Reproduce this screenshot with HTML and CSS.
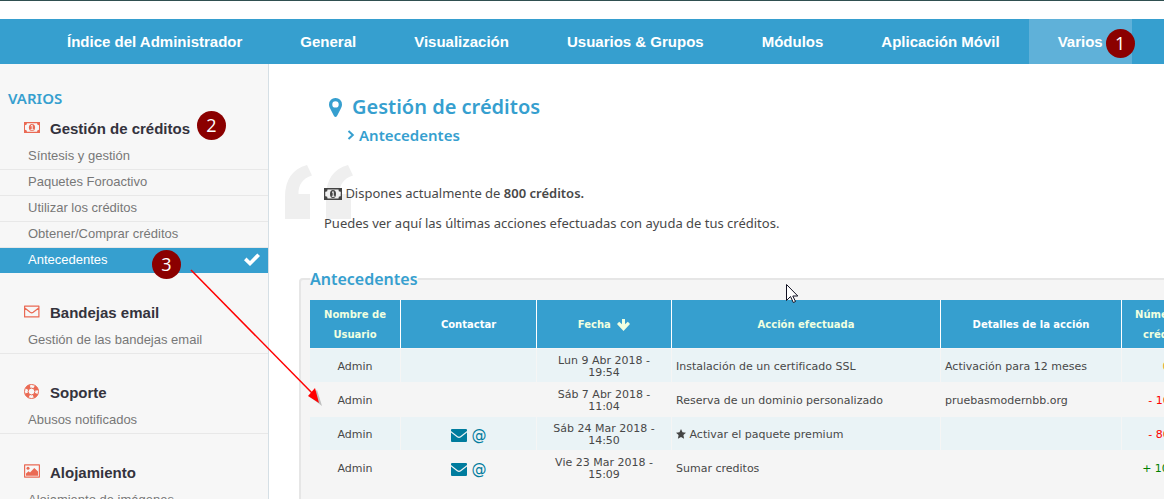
FILE: index.html
```html
<!DOCTYPE html>
<html lang="es">
<head>
<meta charset="utf-8">
<title>Gestión de créditos</title>
<link rel="stylesheet" href="styles.css">
</head>
<body>
<div class="banner"></div>
<nav class="topnav">
  <a href="#">Índice del Administrador</a>
  <a href="#">General</a>
  <a href="#">Visualización</a>
  <a href="#">Usuarios &amp; Grupos</a>
  <a href="#">Módulos</a>
  <a href="#">Aplicación Móvil</a>
  <a href="#" class="current">Varios<span class="step step-one">1</span></a>
</nav>
<div class="layout">
  <aside class="sidebar">
    <h2 class="side-title">Varios</h2>
    <section class="group">
      <h3 class="group-title">
        <svg class="group-icon" viewBox="0 0 16 16"><path fill-rule="evenodd" d="M0 2h16v11H0zM3 3.300a2 2 0 0 1-2 2v4.400a2 2 0 0 1 2 2h10a2 2 0 0 1 2-2V5.300a2 2 0 0 1-2-2z"/><ellipse cx="8" cy="7.500" rx="3.100" ry="3.600"/><path d="M6.800 6.200 8.200 5.100v4.400M6.600 9.700h3" fill="none" stroke="#f7f7f7"/></svg>
        <span>Gestión de créditos</span><span class="step step-two">2</span>
      </h3>
      <ul class="links">
        <li><a href="#">Síntesis y gestión</a></li>
        <li><a href="#">Paquetes Foroactivo</a></li>
        <li><a href="#">Utilizar los créditos</a></li>
        <li><a href="#">Obtener/Comprar créditos</a></li>
        <li class="active"><a href="#">Antecedentes</a><span class="step step-three">3</span>
          <svg class="check" viewBox="0 0 16 13"><path d="M0 7.200 2.500 4.600 6 7.900 13.300.4 16 3 6 13z"/></svg></li>
      </ul>
    </section>
    <section class="group">
      <h3 class="group-title">
        <svg class="group-icon" viewBox="0 0 16 16"><path d="M.6 2.100h14.300v10.800H.6zM.8 4l5.400 4.300q1.500 1.100 3 0L14.700 4" fill="none" stroke="#ea6a54" stroke-width="1.200" stroke-linejoin="round"/></svg>
        <span>Bandejas email</span>
      </h3>
      <ul class="links"><li><a href="#">Gestión de las bandejas email</a></li></ul>
    </section>
    <section class="group">
      <h3 class="group-title">
        <svg class="group-icon" viewBox="0 0 16 16"><g fill="none" stroke="#ea6a54"><circle cx="7.500" cy="7.500" r="7"/><circle cx="7.500" cy="7.500" r="3.400"/><circle cx="7.500" cy="7.500" r="5.300" stroke-width="3.800" stroke-dasharray="4.163 4.163" stroke-dashoffset="-2.081"/></g></svg>
        <span>Soporte</span>
      </h3>
      <ul class="links"><li><a href="#">Abusos notificados</a></li></ul>
    </section>
    <section class="group">
      <h3 class="group-title">
        <svg class="group-icon" viewBox="0 0 16 16"><path d="M.6.900h14.800v12.200H.6z" fill="none" stroke="#ea6a54" stroke-width="1.200" stroke-linejoin="round"/><circle cx="4" cy="4.300" r="1.500"/><path d="M2 11.800V9.600L4.600 7.200 6 8.600 10.300 4 14 7.500v4.300z"/></svg>
        <span>Alojamiento</span>
      </h3>
      <ul class="links"><li><a href="#">Alojamiento de imágenes</a></li></ul>
    </section>
  </aside>
  <main class="content">
    <header class="heading">
      <h1><svg class="pin" viewBox="0 0 13 19"><path fill-rule="evenodd" d="M6.500 0a6.400 6.400 0 0 1 6.500 6.400c0 2-.7 3.100-1.500 4.800L8 18.100q-1.500 1.700-3 0L1.500 11.200C.7 9.500 0 8.400 0 6.400A6.400 6.400 0 0 1 6.500 0zm0 3.200a3.200 3.200 0 1 0 0 6.400 3.200 3.200 0 0 0 0-6.400z"/></svg>Gestión de créditos</h1>
      <h2><svg class="chevron" viewBox="0 0 7 10"><path d="m1 1 4.300 4L1 9"/></svg>Antecedentes</h2>
    </header>
    <div class="intro">
      <svg class="quote" viewBox="0 0 68 54"><path id="mark" d="M22 0 27 10.500Q13 15 13.500 29H25V54H0V32Q0 6 22 0z"/><use href="#mark" x="41"/></svg>
      <p><svg class="bill" viewBox="0 0 18 12"><path fill-rule="evenodd" d="M0 0h18v12H0zM3.500 1.500A2 2 0 0 1 1.300 3.700v4.600a2 2 0 0 1 2.200 2.200h11a2 2 0 0 1 2.200-2.200V3.700a2 2 0 0 1-2.200-2.200z"/><ellipse cx="9" cy="6" rx="3" ry="3.900"/><path d="M8 4.500 9.200 3.600V8M7.800 8.300h2.800" fill="none" stroke="#fff"/></svg> Dispones actualmente de <b>800 créditos.</b></p>
      <p>Puedes ver aquí las últimas acciones efectuadas con ayuda de tus créditos.</p>
    </div>
    <fieldset class="panel">
      <legend>Antecedentes</legend>
      <table class="history">
        <colgroup><col class="c-user"><col class="c-contact"><col class="c-date"><col class="c-action"><col class="c-detail"><col></colgroup>
        <thead>
          <tr>
            <th class="sortable">Nombre de Usuario</th>
            <th>Contactar</th>
            <th class="sortable">Fecha <svg class="sort" viewBox="0 0 13 12"><path d="M5 0h3v5.300l2.800-2.500L13 5 6.500 12 0 5l2.200-2.200L5 5.300z"/></svg></th>
            <th class="sortable">Acción efectuada</th>
            <th>Detalles de la acción</th>
            <th class="sortable">Número de créditos</th>
          </tr>
        </thead>
        <tbody>
          <tr><td>Admin</td><td></td><td>Lun 9 Abr 2018 - 19:54</td><td class="left">Instalación de un certificado SSL</td><td class="left">Activación para 12 meses</td><td class="zero">0</td></tr>
          <tr><td>Admin</td><td></td><td>Sáb 7 Abr 2018 - 11:04</td><td class="left">Reserva de un dominio personalizado</td><td class="left">pruebasmodernbb.org</td><td class="minus">- 1000</td></tr>
          <tr><td>Admin</td><td><a href="#" class="contact" aria-label="Mensaje"><svg viewBox="0 0 16 13"><path d="M1 0h14q1 0 1 1v1L9.300 7.300q-1.300.9-2.600 0L0 2V1q0-1 1-1zM0 3.500l6 4.700q2 1.400 4 0l6-4.700V12q0 1-1 1H1q-1 0-1-1z"/></svg></a><a href="#" class="contact at">@</a></td><td>Sáb 24 Mar 2018 - 14:50</td><td class="left"><svg class="star" viewBox="0 0 10 10"><path d="m5 0 1.500 3.300 3.500.4-2.600 2.400.7 3.600L5 7.900 1.900 9.700l.7-3.600L0 3.700l3.500-.4z"/></svg> Activar el paquete premium</td><td></td><td class="minus">- 8000</td></tr>
          <tr><td>Admin</td><td><a href="#" class="contact" aria-label="Mensaje"><svg viewBox="0 0 16 13"><path d="M1 0h14q1 0 1 1v1L9.300 7.300q-1.300.9-2.600 0L0 2V1q0-1 1-1zM0 3.500l6 4.700q2 1.400 4 0l6-4.700V12q0 1-1 1H1q-1 0-1-1z"/></svg></a><a href="#" class="contact at">@</a></td><td>Vie 23 Mar 2018 - 15:09</td><td class="left">Sumar creditos</td><td></td><td class="plus">+ 10000</td></tr>
        </tbody>
      </table>
    </fieldset>
  </main>
  <svg class="pointer-line" viewBox="0 0 136 142"><path d="M2 5 125 130" stroke="#f00" stroke-width="1.500"/><path d="m133 141-12-9 7-7z" fill="#999" opacity=".6"/><path d="m130 138-11-7 7-8z" fill="#f00"/></svg>
  <svg class="cursor" viewBox="0 0 12 20"><path d="M.5.500v16l4-4 2.800 6 2.200-1-2.700-5.500h5z" fill="#fff" stroke="#112"/></svg>
</div>
</body>
</html>
```
FILE: styles.css
```css
* { box-sizing: border-box; }

body {
  margin: 0;
  height: 100vh;
  overflow: hidden;
  background: #fff;
  color: #484848;
  font-family: "Liberation Sans", sans-serif;
}

h1, h2, h3, p, ul { margin: 0; padding: 0; }
a { color: inherit; text-decoration: none; }

.banner {
  height: 19px;
  border-top: 1px solid #2f4f50;
}

.topnav {
  display: flex;
  padding-left: 38px;
  background: #369fcf;
  color: #fff;
  font-size: 15px;
  font-weight: bold;
  line-height: 45px;
  white-space: nowrap;
}
.topnav a { position: relative; padding: 0 29px; }
.topnav .current { background: #5fb1d9; }

.step {
  position: absolute;
  width: 29px;
  height: 29px;
  border-radius: 50%;
  background: #8b0000;
  color: #fff;
  font: 18px/29px "Open Sans", sans-serif;
  text-align: center;
}
.step-one { top: 10px; right: -3px; }
.step-two { top: -1px; left: 197px; }
.step-three { top: 2px; left: 152px; }

.layout { position: relative; display: flex; min-height: 100vh; }

.sidebar {
  flex: 0 0 269px;
  padding-top: 22px;
  border-right: 1px solid #d5dfe5;
  background: #f7f7f7;
}
.side-title {
  margin-bottom: 2px;
  padding-left: 8px;
  color: #369fcf;
  font: 600 15px/24px "Noto Sans", sans-serif;
  text-transform: uppercase;
}
.group { margin-bottom: 22px; }
.group-title {
  position: relative;
  display: flex;
  align-items: center;
  gap: 10px;
  height: 32px;
  padding-left: 24px;
  color: #34333d;
  font-size: 15px;
}
.group-icon { width: 16px; height: 16px; fill: #ea6a54; }
.links { list-style: none; }
.links li {
  position: relative;
  display: flex;
  justify-content: space-between;
  align-items: center;
  height: 26px;
  padding: 0 8px 2px 28px;
  border-bottom: 1px solid #e8e8e8;
  color: #777;
  font-size: 13px;
}
.links .active { border-color: #f7f7f7; background: #369fcf; background-clip: padding-box; color: #fff; }
.check { width: 16px; height: 13px; fill: #fff; }

.content { flex: 1; min-width: 0; padding: 29px 0 0 30px; }
.heading { padding-left: 30px; color: #369fcf; font-family: "Noto Sans", sans-serif; }
.heading h1 {
  display: flex;
  align-items: center;
  gap: 10px;
  font-size: 20px;
  font-weight: 600;
  line-height: 28px;
}
.heading h2 {
  display: flex;
  align-items: center;
  gap: 4px;
  padding: 2px 0 0 18px;
  font-size: 15px;
  font-weight: 600;
  line-height: 24px;
}
.pin { width: 13px; height: 19px; fill: currentColor; }
.chevron { width: 8px; height: 10px; fill: none; stroke: currentColor; stroke-width: 2; }

.intro {
  position: relative;
  padding: 36px 0 0 25px;
  font: 13px/20px "Noto Sans", sans-serif;
}
.intro p { position: relative; margin-bottom: 10px; }
.intro b { font-weight: 600; }
.quote { position: absolute; top: 18px; left: -14px; width: 68px; height: 54px; fill: #efefef; }
.bill { width: 18px; height: 12px; fill: #444; vertical-align: -2px; }

.panel {
  min-width: 0;
  margin: 34px -59px 0 0;
  padding: 9px 10px 40px 9px;
  border: 2px solid #e6e6e6;
  border-radius: 4px;
  background: #f5f5f5;
}
.panel legend {
  padding: 0;
  color: #369fcf;
  font: 600 16px/24px "Noto Sans", sans-serif;
}

.history {
  width: 100%;
  border-spacing: 0;
  table-layout: fixed;
  font: 11px/12px "DejaVu Sans", sans-serif;
}
.c-user { width: 91px; }
.c-contact { width: 136px; }
.c-date { width: 135px; }
.c-action { width: 269px; }
.c-detail { width: 181px; }
.history th {
  height: 49px;
  padding: 5px 4px 3px;
  border-right: 1px solid #fff;
  border-bottom: 1px solid #f5f5f5;
  background: #369fcf;
  background-clip: padding-box;
  color: #fff;
  font-size: 10px;
  line-height: 20px;
}
.history .sortable { color: #f0ffe0; }
.sort { width: 13px; height: 12px; margin-left: 3px; fill: currentColor; vertical-align: -3px; }
.history td {
  padding: 6px 4px 3px;
  border-right: 1px solid #f5f5f5;
  border-bottom: 1px solid #f5f5f5;
  text-align: center;
}
.history tbody tr:nth-child(odd) td { background: #eaf3f6; background-clip: padding-box; }
.history .left { text-align: left; }
.history .zero { color: #e8a020; }
.history .minus { color: #f00; }
.history .plus { color: #008000; }
.contact { display: inline-block; color: #007c9e; vertical-align: middle; }
.contact svg { display: block; width: 16px; height: 13px; fill: currentColor; }
.at { margin-left: 5px; font: 15px/16px "DejaVu Sans", sans-serif; }
.star { width: 10px; height: 10px; fill: #444; vertical-align: -1px; }

.pointer-line { position: absolute; top: 201px; left: 189px; width: 136px; height: 142px; fill: none; }
.cursor { position: absolute; top: 220px; left: 786px; width: 12px; height: 20px; }
```
